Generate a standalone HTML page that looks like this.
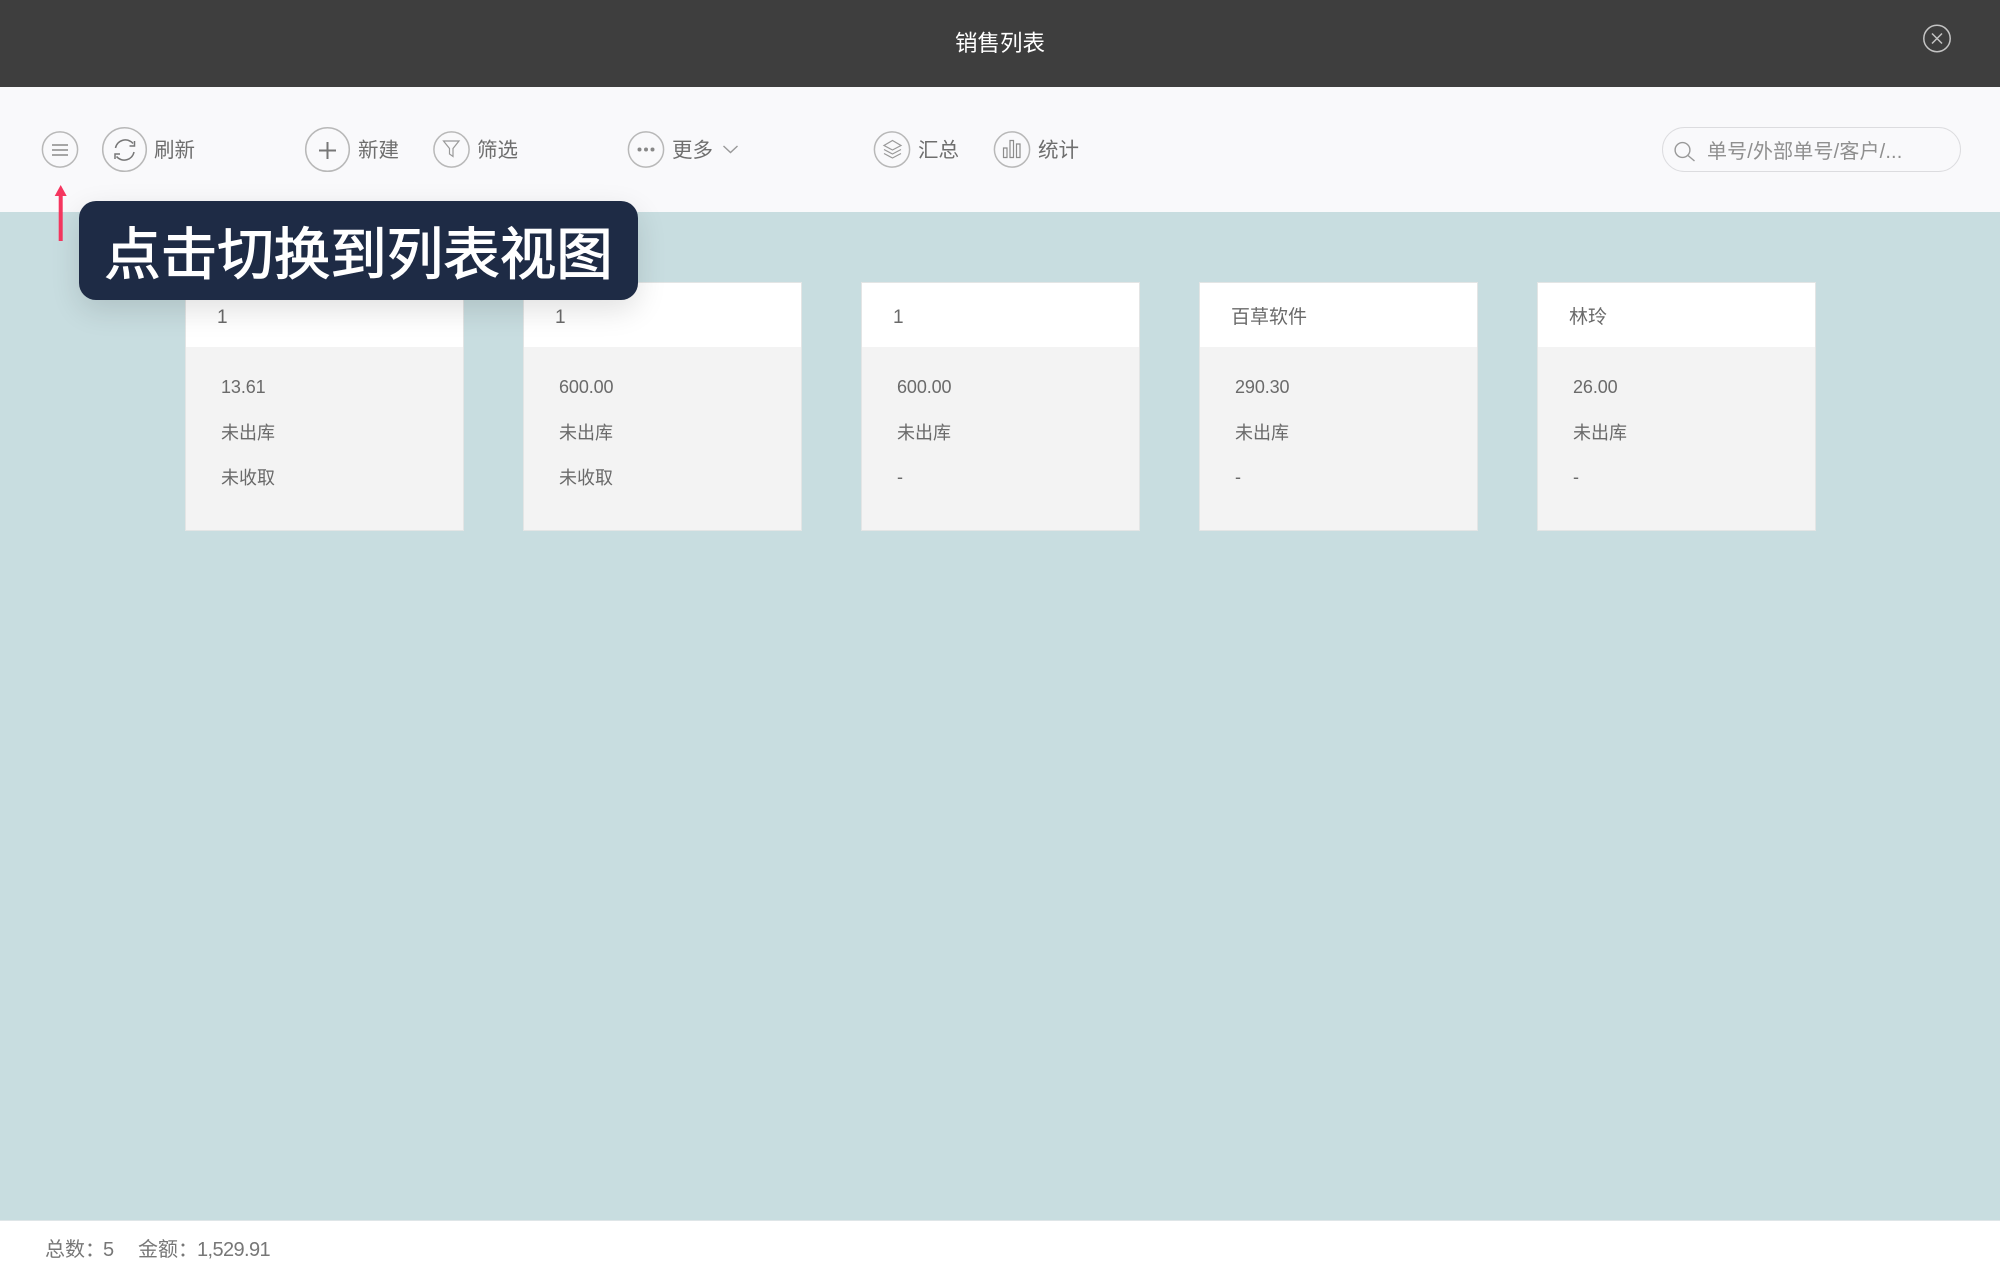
<!DOCTYPE html>
<html lang="zh-CN">
<head>
<meta charset="utf-8">
<title>销售列表</title>
<style>
html,body{margin:0;padding:0;width:2000px;height:1276px;overflow:hidden;background:#c8dde0;font-family:"Liberation Sans","Noto Sans CJK SC",sans-serif;color:#666}
*{box-sizing:border-box}
.abs,.t,.card,.ico{position:absolute}
.t{white-space:nowrap;line-height:30px;height:30px}
#head{position:absolute;left:0;top:0;width:2000px;height:86.5px;background:#3e3e3e}
#bar{position:absolute;left:0;top:86.5px;width:2000px;height:125.5px;background:#f9f9fb}
#foot{position:absolute;left:0;top:1220px;width:2000px;height:56px;background:#fff;border-top:1px solid #dfe6e8}
.tb{font-size:20.5px;color:#6e6e6e;top:136px}
.card{top:282px;width:279.5px;height:249px;background:#f3f3f3;border:1px solid #e3e5e5}
.card .h{position:absolute;left:0;top:0;width:277.5px;height:64px;background:#fff}
.card .a{position:absolute;white-space:nowrap;font-size:19px;color:#6a6a6a;left:31.5px;top:19.5px;line-height:30px}
.card .b{position:absolute;white-space:nowrap;font-size:18px;color:#6a6a6a;left:35.5px;line-height:30px}
.card .n{letter-spacing:-.1px}
#tip{position:absolute;left:79px;top:201px;width:559px;height:98.5px;background:#1e2b45;border-radius:17px;box-shadow:0 10px 30px rgba(0,0,0,.12);color:#fff;font-size:56.5px;font-weight:400;-webkit-text-stroke:1.1px #fff;line-height:98px;text-align:center;white-space:nowrap;font-family:"Noto Sans CJK SC","Liberation Sans",sans-serif}
</style>
</head>
<body>
<div id="head"></div>
<div class="t" style="left:955px;top:28.5px;font-size:22.5px;color:#fff">销售列表</div>
<svg class="ico" style="left:1921px;top:22px" width="32" height="33" viewBox="0 0 32 33" fill="none" stroke="#c4c4c4"><circle cx="16" cy="16.5" r="13.2" stroke-width="1.5"/><path d="M11 11.500l10 10M21 11.500l-10 10" stroke-width="1.500"/></svg>

<div id="bar"></div>

<svg class="abs" style="left:0;top:86px" width="1100" height="126" viewBox="0 86 1100 126" fill="none" stroke="#b8b8b8" stroke-width="1.500">
  <circle cx="60" cy="149.500" r="17.600"/>
  <path d="M52 145h16M52 150h16M52 155h16" stroke="#8a8a8a"/>
  <circle cx="124.500" cy="149.500" r="21.800"/>
  <path d="M115.500 148a10 10 0 0 1 17.500-4.500M134 152a10 10 0 0 1-17.500 4.500" stroke="#777" stroke-width="1.500"/>
  <path d="M134.500 141v5h-5M115 159v-5h5" stroke="#777" stroke-width="1.500"/>
  <circle cx="327.500" cy="149.500" r="21.800"/>
  <path d="M319 150.500h17M327.500 142v17" stroke="#777" stroke-width="2"/>
  <circle cx="451.500" cy="149.500" r="17.600"/>
  <path d="M443.500 141h15.500l-6 7.500v8l-3.500-2.500v-5.500z" stroke="#999" stroke-width="1.200"/>
  <circle cx="646" cy="149.500" r="17.600"/>
  <circle cx="639.500" cy="149.500" r="2" fill="#888" stroke="none"/>
  <circle cx="646" cy="149.500" r="2" fill="#888" stroke="none"/>
  <circle cx="652.500" cy="149.500" r="2" fill="#888" stroke="none"/>
  <path d="M723.500 146l7 6.500 7-6.500" stroke="#999" stroke-width="1.400"/>
  <circle cx="892" cy="149.500" r="17.600"/>
  <path d="M892.500 140.500l8.500 5-8.500 4.500-8.500-4.500zM884 149.500l8.500 4.500 8.500-4.500M884 153.500l8.500 4.500 8.500-4.500" stroke="#999" stroke-width="1.200"/>
  <circle cx="1012" cy="149.500" r="17.600"/>
  <path d="M1003.500 148h3.500v9.500h-3.500zM1010 140.500h3.500v17H1010zM1016.500 144h3.500v13.500h-3.500z" stroke="#8c8c8c" stroke-width="1.200"/>
</svg>

<div class="t tb" style="left:154px">刷新</div>
<div class="t tb" style="left:358px">新建</div>
<div class="t tb" style="left:477px">筛选</div>
<div class="t tb" style="left:672px">更多</div>
<div class="t tb" style="left:918px">汇总</div>
<div class="t tb" style="left:1038px">统计</div>

<div class="abs" style="left:1662px;top:127px;width:299px;height:45px;border:1.500px solid #dcdcdf;border-radius:23px"></div>
<svg class="abs" style="left:1670px;top:138px" width="28" height="26" viewBox="0 0 28 26" fill="none" stroke="#999" stroke-width="1.400"><circle cx="12.500" cy="12" r="7.400"/><path d="M18 17.500l6.500 5.500"/></svg>
<div class="t" style="left:1707px;top:136.500px;font-size:20px;color:#8f8f8f;letter-spacing:.15px">单号/外部单号/客户/...</div>

<div class="card" style="left:184.500px"><div class="h"><div class="a">1</div></div><div class="b n" style="top:88.500px">13.61</div><div class="b" style="top:134.500px">未出库</div><div class="b" style="top:179.500px">未收取</div></div>
<div class="card" style="left:522.500px"><div class="h"><div class="a">1</div></div><div class="b n" style="top:88.500px">600.00</div><div class="b" style="top:134.500px">未出库</div><div class="b" style="top:179.500px">未收取</div></div>
<div class="card" style="left:860.500px"><div class="h"><div class="a">1</div></div><div class="b n" style="top:88.500px">600.00</div><div class="b" style="top:134.500px">未出库</div><div class="b" style="top:179px">-</div></div>
<div class="card" style="left:1198.500px"><div class="h"><div class="a">百草软件</div></div><div class="b n" style="top:88.500px">290.30</div><div class="b" style="top:134.500px">未出库</div><div class="b" style="top:179px">-</div></div>
<div class="card" style="left:1536.500px"><div class="h"><div class="a">林玲</div></div><div class="b n" style="top:88.500px">26.00</div><div class="b" style="top:134.500px">未出库</div><div class="b" style="top:179px">-</div></div>

<svg class="abs" style="left:50px;top:183px" width="22" height="60" viewBox="0 0 22 60"><path d="M10.700 2l6 11h-4v45h-4V13h-4z" fill="#f5365f"/></svg>
<div id="tip">点击切换到列表视图</div>

<div id="foot"></div>
<div class="t" style="left:45px;top:1234.500px;font-size:20px;color:#777">总数：</div>
<div class="t" style="left:103px;top:1234.500px;font-size:20px;color:#777">5</div>
<div class="t" style="left:138px;top:1234.500px;font-size:20px;color:#777">金额：</div>
<div class="t" style="left:197px;top:1234.500px;font-size:20px;color:#777;letter-spacing:-.6px">1,529.91</div>
</body>
</html>
